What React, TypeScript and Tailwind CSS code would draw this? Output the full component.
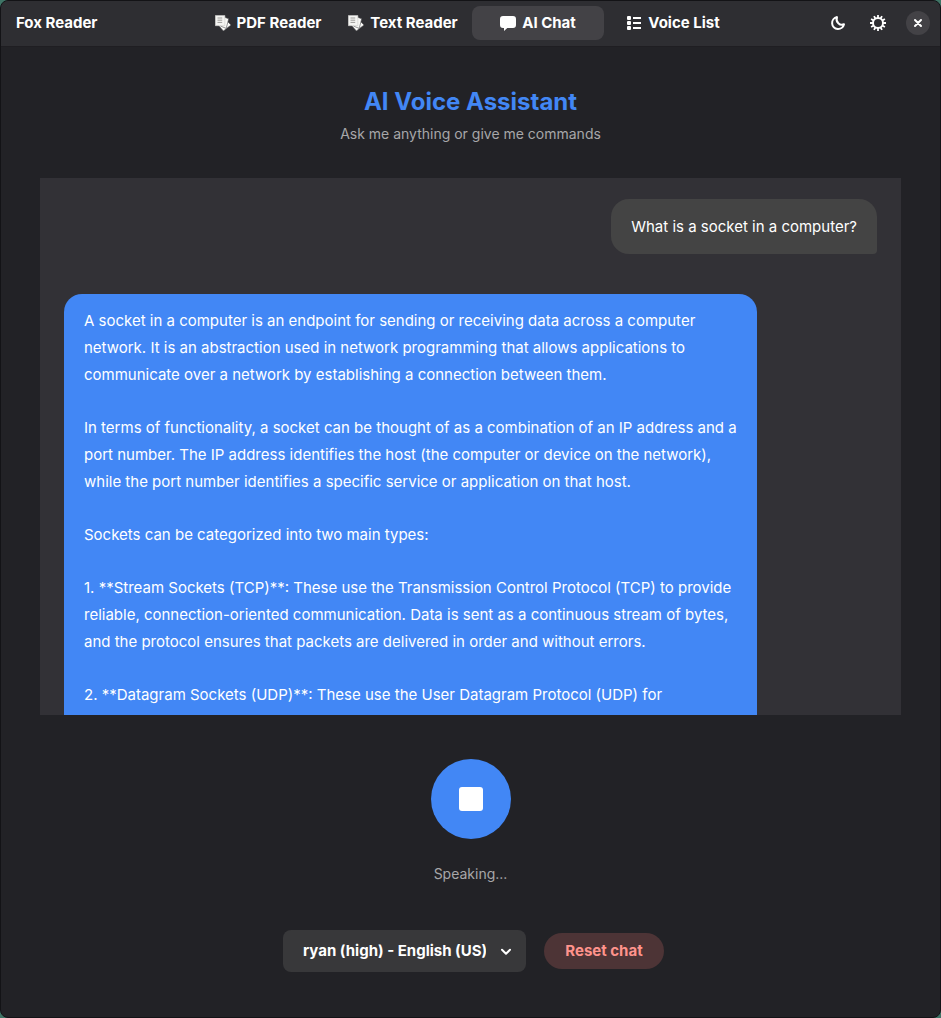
import type { ReactNode } from 'react';

function PagesIcon() {
  return (
    <svg width="16" height="16" viewBox="0 0 16 16" aria-hidden="true">
      <g stroke="#4a494e" strokeWidth="0.6" fill="#fafaf8" strokeLinejoin="round">
        <path d="M10 4 16 10 8.4 16 3.6 10.5Z" />
        <path d="M9.5 2.2 13.7 3.8 11.2 13.4 5.4 11Z" />
      </g>
      <path d="M0.3 0.5H9.9V10.7H0.3Z" fill="#f4f4f2" stroke="#c9c9c7" strokeWidth="0.6" />
      <path d="M2.5 3H7.2M2.5 5.2H7.2M2.5 7.4H7.2" stroke="#92918f" strokeWidth="0.9" />
    </svg>
  );
}

function ChatIcon() {
  return (
    <svg width="16" height="16" viewBox="0 0 16 16" fill="currentColor" aria-hidden="true">
      <path d="M3 1H13A3 3 0 0 1 16 4V10A3 3 0 0 1 13 13H7.3L4 16V13H3A3 3 0 0 1 0 10V4A3 3 0 0 1 3 1Z" />
    </svg>
  );
}

function ListIcon() {
  return (
    <svg width="16" height="16" viewBox="0 0 16 16" fill="currentColor" aria-hidden="true">
      <rect x="1" y="1" width="4" height="4" rx="1" />
      <rect x="1" y="6" width="4" height="4" rx="1" />
      <rect x="1" y="11" width="4" height="4" rx="1" />
      <path d="M7 2H15V4H7ZM7 7H15V9H7ZM7 12H15V14H7Z" />
    </svg>
  );
}

function MoonIcon() {
  return (
    <svg width="16" height="16" viewBox="0 0 16 16" fill="none" stroke="currentColor" strokeWidth="2" strokeLinejoin="round" aria-hidden="true">
      <path d="M7 2.1A6 6 0 1 0 14 9.2C10 11.3 5.2 7 7 2.1Z" />
    </svg>
  );
}

function GearIcon() {
  return (
    <svg width="16" height="16" viewBox="0 0 16 16" fill="none" stroke="currentColor" strokeWidth="2" aria-hidden="true">
      <circle cx="8" cy="8" r="5" />
      <path
        strokeWidth="1.8"
        d="M8 3V0M8 13V16M3 8H0M13 8H16M10.5 3.7 12 1.1M12.3 5.5 14.9 4M12.3 10.5 14.9 12M10.5 12.3 12 14.9M5.5 12.3 4 14.9M3.7 10.5 1.1 12M3.7 5.5 1.1 4M5.5 3.7 4 1.1"
      />
    </svg>
  );
}

function CloseIcon() {
  return (
    <svg width="16" height="16" viewBox="0 0 16 16" fill="none" stroke="currentColor" strokeWidth="2" strokeLinecap="round" aria-hidden="true">
      <path d="M5 5 11 11M11 5 5 11" />
    </svg>
  );
}

type TabProps = { icon: ReactNode; label: string; active?: boolean };

function Tab({ icon, label, active = false }: TabProps) {
  return (
    <button
      type="button"
      aria-pressed={active}
      className={`flex h-[34px] w-[132px] items-center justify-center gap-1.5 rounded-lg font-bold whitespace-nowrap ${
        active ? 'bg-[#434246]' : 'hover:bg-[#39383d]'
      }`}
    >
      {icon}
      {label}
    </button>
  );
}

const answer = [
  'A socket in a computer is an endpoint for sending or receiving data across a computer network. It is an abstraction used in network programming that allows applications to communicate over a network by establishing a connection between them.',
  'In terms of functionality, a socket can be thought of as a combination of an IP address and a port number. The IP address identifies the host (the computer or device on the network), while the port number identifies a specific service or application on that host.',
  'Sockets can be categorized into two main types:',
  '1. **Stream Sockets (TCP)**: These use the Transmission Control Protocol (TCP) to provide reliable, connection-oriented communication. Data is sent as a continuous stream of bytes, and the protocol ensures that packets are delivered in order and without errors.',
  '2. **Datagram Sockets (UDP)**: These use the User Datagram Protocol (UDP) for',
];

export default function App() {
  return (
    <div className="h-screen bg-[#3f7466] font-['Inter',sans-serif] text-[15px] text-white">
      <div className="flex h-full flex-col overflow-hidden rounded-lg border border-[#131316] bg-[#222226]">
        <header className="grid h-[46px] shrink-0 grid-cols-[1fr_auto_1fr] items-center border-b border-[#1f1e22] bg-[#2e2e32] pb-px">
          <h1 className="pl-[15px] font-bold">Fox Reader</h1>
          <nav className="flex gap-[3px]">
            <Tab icon={<PagesIcon />} label="PDF Reader" />
            <Tab icon={<PagesIcon />} label="Text Reader" />
            <Tab icon={<ChatIcon />} label="AI Chat" active />
            <Tab icon={<ListIcon />} label="Voice List" />
          </nav>
          <div className="flex items-center justify-end gap-4 pr-2.5">
            <button type="button" aria-label="Dark mode" className="grid size-6 place-items-center">
              <MoonIcon />
            </button>
            <button type="button" aria-label="Settings" className="grid size-6 place-items-center">
              <GearIcon />
            </button>
            <button type="button" aria-label="Close" className="grid size-6 place-items-center rounded-full bg-[#434246]">
              <CloseIcon />
            </button>
          </div>
        </header>

        <main className="flex min-h-0 flex-1 flex-col items-center px-[39px] pt-[39px] pb-[45px]">
          <h2 className="text-2xl font-bold text-[#4287f5]">AI Voice Assistant</h2>
          <p className="mt-1.5 text-sm leading-5 text-[#a7a7a9]">Ask me anything or give me commands</p>

          <section
            aria-label="Conversation"
            className="mt-[34px] flex min-h-0 w-full flex-1 flex-col gap-10 overflow-y-auto bg-[#323136] px-6 pt-[21px] leading-[27px] [scrollbar-width:none]"
          >
            <p className="shrink-0 self-end rounded-[18px] rounded-br-[4px] bg-[#444444] px-5 py-3.5">
              What is a socket in a computer?
            </p>
            <div className="flex w-[693px] max-w-full shrink-0 flex-col gap-[26px] self-start rounded-t-[18px] bg-[#4287f5] px-5 pt-[13px] pb-16">
              {answer.map((paragraph) => (
                <p key={paragraph}>{paragraph}</p>
              ))}
            </div>
          </section>

          <button type="button" aria-label="Stop speaking" className="mt-11 grid size-20 shrink-0 place-items-center rounded-full bg-[#4287f5]">
            <svg width="24" height="24" viewBox="0 0 24 24" fill="currentColor" aria-hidden="true">
              <rect width="24" height="24" rx="3" />
            </svg>
          </button>
          <p role="status" className="mt-[25px] text-sm leading-5 text-[#a7a7a9]">Speaking...</p>

          <div className="mt-[46px] flex items-center gap-[18px] pl-1.5 font-bold">
            <div className="grid items-center">
              <select
                aria-label="Voice"
                className="col-start-1 row-start-1 h-[42px] w-[243px] appearance-none rounded-lg bg-[#38383a] pr-10 pl-5"
              >
                <option>ryan (high) - English (US)</option>
              </select>
              <svg
                width="16"
                height="16"
                viewBox="0 0 16 16"
                fill="none"
                stroke="currentColor"
                strokeWidth="2"
                strokeLinecap="round"
                strokeLinejoin="round"
                aria-hidden="true"
                className="pointer-events-none col-start-1 row-start-1 mr-3 justify-self-end"
              >
                <path d="M4 6.8 8 10.8 12 6.8" />
              </svg>
            </div>
            <button type="button" className="h-9 w-[120px] rounded-full bg-[#4d3436] text-[#ff938c]">
              Reset chat
            </button>
          </div>
        </main>
      </div>
    </div>
  );
}
